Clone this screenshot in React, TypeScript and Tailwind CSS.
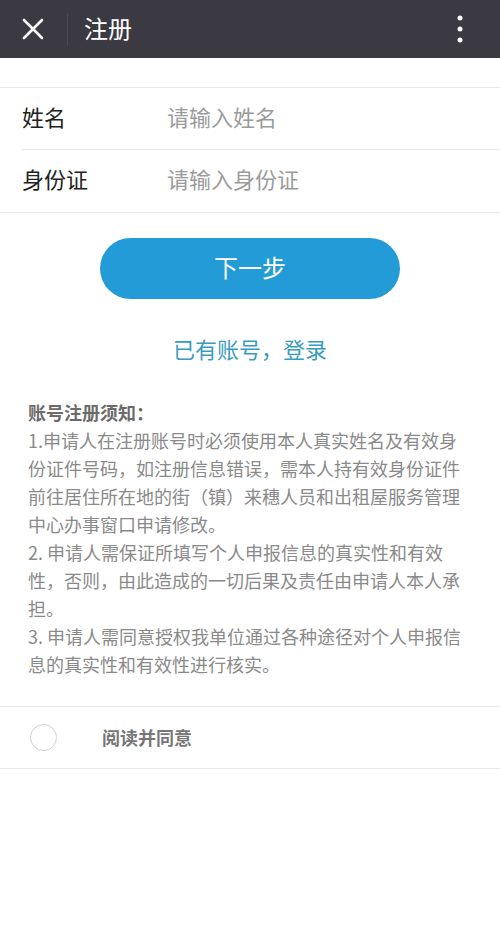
import { useState } from "react";

const FONT = { fontFamily: '"Noto Sans CJK SC", "Noto Sans", sans-serif' };

const NOTICE = [
  "1.申请人在注册账号时必须使用本人真实姓名及有效身份证件号码，如注册信息错误，需本人持有效身份证件前往居住所在地的街（镇）来穗人员和出租屋服务管理中心办事窗口申请修改。",
  "2. 申请人需保证所填写个人申报信息的真实性和有效性，否则，由此造成的一切后果及责任由申请人本人承担。",
  "3. 申请人需同意授权我单位通过各种途径对个人申报信息的真实性和有效性进行核实。",
];

function Field({ label, placeholder, last }: { label: string; placeholder: string; last?: boolean }) {
  return (
    <div className={`ml-[22px] flex h-[62px] items-center pb-[5px] ${last ? "" : "border-b border-[#e8e8e8]"}`}>
      <span className="w-[145px] text-[22px] text-[#222]">{label}</span>
      <input
        placeholder={placeholder}
        className="min-w-0 flex-1 bg-transparent text-[22px] text-[#222] outline-none placeholder:text-[#9b9b9b]"
        style={FONT}
      />
    </div>
  );
}

export default function App() {
  const [agreed, setAgreed] = useState(false);

  return (
    <div className="min-h-[925px] w-full bg-white" style={FONT}>
      {/* title bar */}
      <div className="flex h-[58px] items-center bg-[#3b3a42]">
        <svg className="ml-[22px]" width="22" height="22" viewBox="0 0 22 22">
          <path d="M2 2 L20 20 M20 2 L2 20" stroke="#fff" strokeWidth="2.6" strokeLinecap="round" />
        </svg>
        <div className="ml-[23px] h-[32px] w-px bg-[#4a4951]" />
        <span className="ml-[16px] pb-[3px] text-[24px] leading-none text-white">注册</span>
        <svg className="ml-auto mr-[37px]" width="6" height="28" viewBox="0 0 6 28">
          <circle cx="3" cy="3" r="2.5" fill="#fff" />
          <circle cx="3" cy="14" r="2.5" fill="#fff" />
          <circle cx="3" cy="25" r="2.5" fill="#fff" />
        </svg>
      </div>

      {/* form */}
      <div className="mt-[29px] border-y border-[#e8e8e8]">
        <Field label="姓名" placeholder="请输入姓名" />
        <Field label="身份证" placeholder="请输入身份证" last />
      </div>

      <button className="mx-auto mt-[25px] flex h-[61px] w-[300px] items-center justify-center rounded-full bg-[#239bd6] pb-[4px] text-[24px] text-white">
        下一步
      </button>

      <p className="mt-[34px] text-center text-[22px] leading-[30px] text-[#3a9bbf]">已有账号，登录</p>

      {/* notice */}
      <div className="mt-[35px] px-[28px] text-[18px] leading-[28px] text-[#8a8a8a]">
        <p className="font-bold text-[#6b6b6b]">账号注册须知：</p>
        {NOTICE.map((t) => (
          <p key={t}>{t}</p>
        ))}
      </div>

      {/* agree */}
      <label className="mt-[28px] flex h-[63px] cursor-pointer items-center border-y border-[#e8e8e8]">
        <span
          className={`ml-[30px] flex h-[27px] w-[27px] items-center justify-center rounded-full border ${
            agreed ? "border-[#239bd6] bg-[#239bd6]" : "border-[#cfcfcf]"
          }`}
        >
          <input type="checkbox" className="hidden" checked={agreed} onChange={() => setAgreed((a) => !a)} />
        </span>
        <span className="ml-[45px] text-[18px] font-bold text-[#777]">阅读并同意</span>
      </label>
    </div>
  );
}
